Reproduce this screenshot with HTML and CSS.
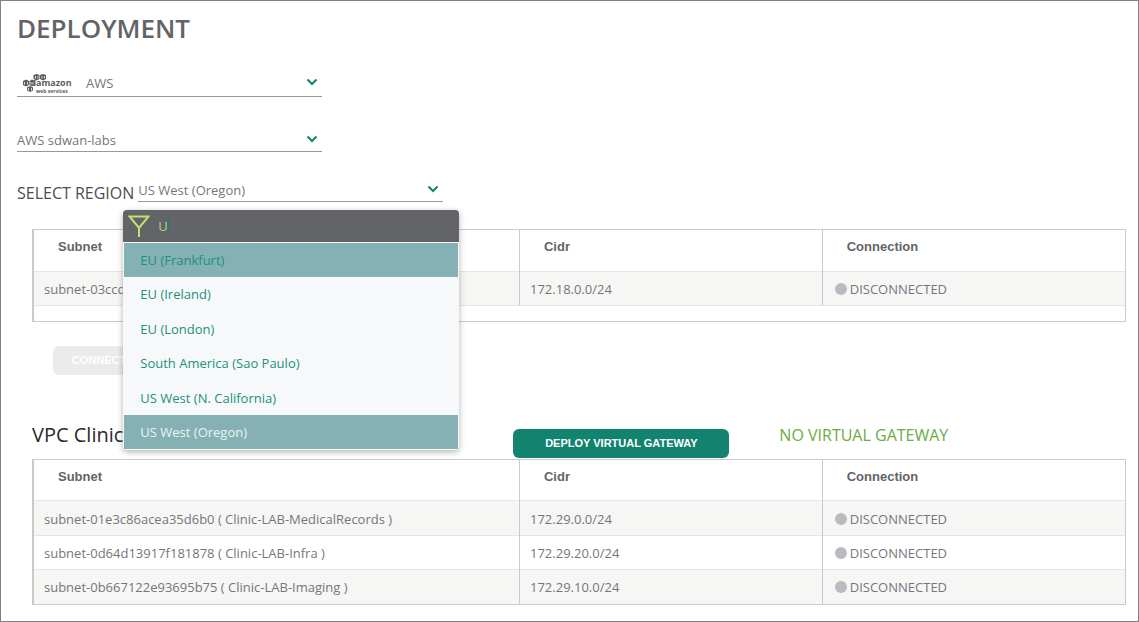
FILE: index.html
```html
<!DOCTYPE html>
<html lang="en">
<head>
  <meta charset="UTF-8">
  <title>Deployment</title>
  <meta name="viewport" content="width=device-width, initial-scale=1.0">
  <link rel="stylesheet" href="styles.css">
</head>
<body>
  <main class="page">
    <h1>DEPLOYMENT</h1>

    <div class="select-box provider">
      <svg class="aws-logo" width="50" height="22" viewBox="0 0 50 22" aria-hidden="true">
        <g fill="#5c5d60">
          <path d="M10.500 2l3-1 3 1v4l-3 1.500-3-1.500z"/>
          <path d="M17 2l3-1 3 1v4l-3 1.500L17 6z"/>
          <path d="M0 8l3-1.500L6 8v4l-3 1.500L0 12z"/>
          <path d="M6.500 8L9 6.500 11.500 8v4L9 13.500 6.500 12z"/>
          <path d="M4 14.500L7 13l3 1.500v3L7 19l-3-1.500z"/>
          <path d="M10.500 7h2v6h-2z"/>
        </g>
        <path d="M12.500 3v2.500M15 3v2.500M19 3v2.500M21.500 3v2.500M1.500 9v2.500M4.500 9v2.500M8 9v2.500M10 9v2.500M5.500 15v2.500M8.500 15v2.500" stroke="#fff" stroke-width="0.8"/>
        <text x="13" y="13" class="logo-name">amazon</text>
        <text x="13" y="20" class="logo-sub">web services</text>
      </svg>
      <select id="provider" aria-label="Cloud provider">
        <option>AWS</option>
      </select>
      <svg class="chevron" width="12" height="8" viewBox="0 0 12 8"><path d="M1.500 1.500L6 6l4.500-4.500"/></svg>
    </div>

    <div class="select-box account">
      <select id="account" aria-label="Account">
        <option>AWS sdwan-labs</option>
      </select>
      <svg class="chevron" width="12" height="8" viewBox="0 0 12 8"><path d="M1.500 1.500L6 6l4.500-4.500"/></svg>
    </div>

    <div class="region">
      <label for="region">SELECT REGION</label>
      <div class="select-box">
        <select id="region">
          <option>US West (Oregon)</option>
        </select>
        <svg class="chevron" width="12" height="8" viewBox="0 0 12 8"><path d="M1.500 1.500L6 6l4.500-4.500"/></svg>

        <div class="menu">
          <div class="filter">
            <svg width="22" height="22" viewBox="0 0 22 22" aria-hidden="true"><path d="M1.500 1.500h19L11 13z M11 12.500V22"/></svg>
            <input type="text" value="U" aria-label="Filter regions">
            <span class="caret"></span>
          </div>
          <ul>
            <li><button type="button" class="active">EU (Frankfurt)</button></li>
            <li><button type="button">EU (Ireland)</button></li>
            <li><button type="button">EU (London)</button></li>
            <li><button type="button">South America (Sao Paulo)</button></li>
            <li><button type="button">US West (N. California)</button></li>
            <li><button type="button" class="selected">US West (Oregon)</button></li>
          </ul>
        </div>
      </div>
    </div>

    <section class="vpc">
      <div class="table-box spaced">
        <table>
          <thead>
            <tr><th class="col-subnet">Subnet</th><th>Cidr</th><th>Connection</th></tr>
          </thead>
          <tbody>
            <tr><td>subnet-03ccd</td><td>172.18.0.0/24</td><td><span class="dot"></span>DISCONNECTED</td></tr>
          </tbody>
        </table>
      </div>
      <button type="button" class="btn connect" disabled>CONNECT</button>
    </section>

    <section class="vpc">
      <div class="vpc-head">
        <h2>VPC Clinic</h2>
        <button type="button" class="btn deploy">DEPLOY VIRTUAL GATEWAY</button>
        <span class="status">NO VIRTUAL GATEWAY</span>
      </div>
      <div class="table-box">
        <table>
          <thead>
            <tr><th class="col-subnet">Subnet</th><th>Cidr</th><th>Connection</th></tr>
          </thead>
          <tbody>
            <tr><td>subnet-01e3c86acea35d6b0 ( Clinic-LAB-MedicalRecords )</td><td>172.29.0.0/24</td><td><span class="dot"></span>DISCONNECTED</td></tr>
            <tr><td>subnet-0d64d13917f181878 ( Clinic-LAB-Infra )</td><td>172.29.20.0/24</td><td><span class="dot"></span>DISCONNECTED</td></tr>
            <tr><td>subnet-0b667122e93695b75 ( Clinic-LAB-Imaging )</td><td>172.29.10.0/24</td><td><span class="dot"></span>DISCONNECTED</td></tr>
          </tbody>
        </table>
      </div>
    </section>
  </main>
</body>
</html>
```
FILE: styles.css
```css
* {
  box-sizing: border-box;
}

body {
  margin: 0;
  background: #fff;
  color: #75767a;
  font-family: 'Open Sans', sans-serif;
  font-size: 13px;
}

.page {
  min-height: 100vh;
  padding: 9px 12px 12px 16px;
  border: 1px solid #808080;
}

h1 {
  margin: 0 0 25px;
  color: #636468;
  font-size: 26px;
  font-weight: 600;
  line-height: 36px;
}

/* drop-downs */
.select-box {
  position: relative;
  display: flex;
  align-items: center;
  width: 305px;
  height: 22px;
  padding-bottom: 1px;
  border-bottom: 1px solid #98999b;
}
.select-box select {
  flex: 1;
  padding: 0;
  border: none;
  outline: none;
  appearance: none;
  background: none;
  color: #75767a;
  font: inherit;
}
.chevron {
  margin: 0 4px 2px 0;
  fill: none;
  stroke: #12836f;
  stroke-width: 2;
}
.provider {
  height: 26px;
  margin-bottom: 33px;
}
.account {
  margin-bottom: 28px;
}
.aws-logo {
  margin: 2px 13px 0 6px;
}
.logo-name,
.logo-sub {
  fill: #5c5d60;
}
.logo-name {
  font-size: 9px;
  font-weight: 700;
}
.logo-sub {
  font-size: 5px;
  font-weight: 700;
}

.region {
  display: flex;
  align-items: center;
  gap: 4px;
  height: 22px;
  margin-bottom: 27px;
}
.region label {
  padding-top: 4px;
  color: #4c4d50;
  font-size: 16px;
  line-height: 22px;
}

/* open region menu */
.menu {
  position: absolute;
  top: 30px;
  left: -15px;
  z-index: 2;
  width: 336px;
  border-radius: 4px;
  background: #f7f8fa;
  box-shadow: 0 2px 6px rgba(0, 0, 0, 0.3);
}
.filter {
  position: relative;
  display: flex;
  align-items: center;
  gap: 8px;
  height: 32px;
  padding: 0 5px;
  border-radius: 4px 4px 0 0;
  background: #636468;
}
.filter svg {
  fill: none;
  stroke: #c5e06c;
  stroke-width: 2;
}
.filter input {
  flex: 1;
  padding: 0;
  border: none;
  outline: none;
  background: none;
  color: #b5d16a;
  font: inherit;
}
.caret {
  position: absolute;
  top: 8px;
  left: 45px;
  width: 1px;
  height: 17px;
  background: #12836f;
}
.menu ul {
  display: flex;
  flex-direction: column;
  justify-content: space-between;
  height: 208px;
  margin: 0;
  padding: 1px;
  list-style: none;
}
.menu li button {
  display: block;
  width: 100%;
  height: 34px;
  padding: 0 16px;
  border: none;
  background: none;
  color: #1c917d;
  font: inherit;
  text-align: left;
  cursor: pointer;
}
.menu li .active,
.menu li .selected {
  background: #86b1b4;
}
.menu li .selected {
  color: #e9f3f3;
}

/* tables */
.vpc {
  padding-left: 15px;
}
.table-box {
  border: 1px solid #c9cacc;
  border-left-width: 2px;
}
.spaced {
  padding-bottom: 15px;
}
table {
  width: 100%;
  border-collapse: collapse;
  table-layout: fixed;
}
.col-subnet {
  width: 44.5%;
}
th {
  height: 41px;
  padding: 0 24px 7px;
  color: #636468;
  font-family: 'Liberation Sans', sans-serif;
  text-align: left;
}
td {
  height: 34px;
  padding: 1px 10px 0;
  border-top: 1px solid #e4e5e6;
}
.vpc-head + .table-box tr:first-child td {
  height: 35px;
}
.spaced td {
  border-bottom: 1px solid #e4e5e6;
}
th + th,
td + td {
  border-left: 1px solid #c9cacc;
}
td:last-child {
  padding-left: 12px;
}
tbody tr:nth-child(odd) {
  background: #f6f6f5;
}
.dot {
  display: inline-block;
  width: 12px;
  height: 12px;
  margin-right: 3px;
  border-radius: 50%;
  background: #babbc0;
  vertical-align: -1px;
}

.btn {
  height: 29px;
  border: none;
  border-radius: 6px;
  color: #fff;
  font-family: 'Liberation Sans', sans-serif;
  font-size: 11px;
  font-weight: bold;
}
.connect {
  display: block;
  width: 92px;
  margin: 24px 0 0 21px;
  background: #ebebeb;
}
.vpc-head {
  display: flex;
  align-items: flex-start;
  height: 30px;
  margin-top: 54px;
}
.vpc-head h2 {
  width: 44%;
  margin: 0;
  color: #2b2b2d;
  font-size: 20px;
  font-weight: 500;
  line-height: 12px;
}
.deploy {
  width: 216px;
  background: #12836f;
  cursor: pointer;
}
.status {
  margin-left: 50px;
  color: #6aab42;
  font-size: 16px;
  line-height: 12px;
}
```
